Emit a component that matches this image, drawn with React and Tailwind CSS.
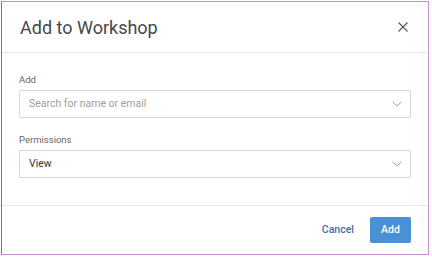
const Chevron = () => (
  <svg width="10" height="6" viewBox="0 0 10 6" fill="none" stroke="#9a9a9a" strokeWidth="1">
    <polyline points="0.5,0.8 5,5 9.5,0.8" />
  </svg>
);

const Field = ({ label, className, children }) => (
  <div className={"flex flex-col " + className}>
    <label className="mb-[4px] text-[9.5px] leading-[12px] text-[#666]">{label}</label>
    <div className="flex h-[28px] items-center justify-between rounded-[2px] border border-[#d6d6d6] pl-[9px] pr-[8px]">
      {children}
      <Chevron />
    </div>
  </div>
);

export default function App() {
  return (
    <div className="h-[258px] w-[432px] bg-white pl-[1px] pt-[1px] font-['Roboto',sans-serif]">
      <div className="flex h-[254px] w-[428px] flex-col border-[1.5px] border-[#c88fd3] border-l-[#8f6a97] bg-white">
        {/* header */}
        <div className="flex h-[51px] items-center justify-between border-b border-[#e8e8e8] pl-[18px] pr-[20px]">
          <h1 className="text-[18px] text-[#484848]">Add to Workshop</h1>
          <svg width="10" height="10" viewBox="0 0 10 10" stroke="#555" strokeWidth="1.1">
            <line x1="0.5" y1="0.5" x2="9.5" y2="9.5" />
            <line x1="9.5" y1="0.5" x2="0.5" y2="9.5" />
          </svg>
        </div>

        {/* body */}
        <div className="flex flex-1 flex-col border-b border-[#e8e8e8] px-[17px] pt-[21px]">
          <Field label="Add">
            <span className="text-[10.5px] text-[#a0a0a0]">Search for name or email</span>
          </Field>
          <Field label="Permissions" className="mt-[16px]">
            <span className="text-[10.5px] text-[#333]">View</span>
          </Field>
        </div>

        {/* footer */}
        <div className="flex h-[48px] items-center justify-end gap-[16px] pr-[17px]">
          <button className="text-[10.5px] font-medium text-[#3b6fa9]">Cancel</button>
          <button className="h-[26px] w-[41px] rounded-[2px] bg-[#4a90d6] text-[10.5px] font-medium text-white">Add</button>
        </div>
      </div>
    </div>
  );
}
